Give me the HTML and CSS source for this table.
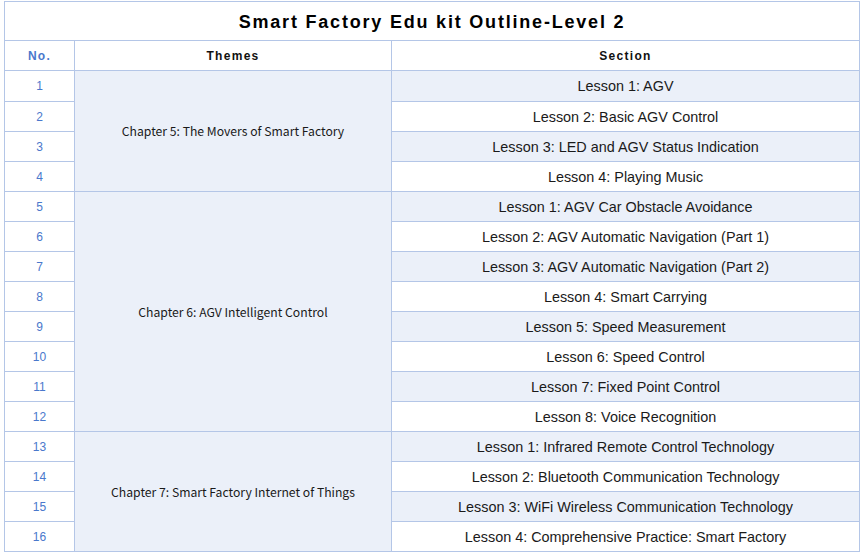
FILE: index.html
```html
<!DOCTYPE html>
<html>
<head>
<meta charset="utf-8">
<link rel="stylesheet" href="styles.css">
</head>
<body>
<div class="wrap">
<table class="outline">
  <colgroup><col class="c-no"><col class="c-theme"><col class="c-sec"></colgroup>
  <tr class="title-row"><th colspan="3" class="title">Smart Factory Edu kit Outline-Level 2</th></tr>
  <tr class="head-row"><th class="h-no">No.</th><th class="h">Themes</th><th class="h">Section</th></tr>
  <tr class="first-row"><td class="no">1</td><td class="theme" rowspan="4">Chapter 5: The Movers of Smart Factory</td><td class="sec alt">Lesson 1: AGV</td></tr>
  <tr><td class="no">2</td><td class="sec">Lesson 2: Basic AGV Control</td></tr>
  <tr><td class="no">3</td><td class="sec alt">Lesson 3: LED and AGV Status Indication</td></tr>
  <tr><td class="no">4</td><td class="sec">Lesson 4: Playing Music</td></tr>
  <tr><td class="no">5</td><td class="theme" rowspan="8">Chapter 6: AGV Intelligent Control</td><td class="sec alt">Lesson 1: AGV Car Obstacle Avoidance</td></tr>
  <tr><td class="no">6</td><td class="sec">Lesson 2: AGV Automatic Navigation (Part 1)</td></tr>
  <tr><td class="no">7</td><td class="sec alt">Lesson 3: AGV Automatic Navigation (Part 2)</td></tr>
  <tr><td class="no">8</td><td class="sec">Lesson 4: Smart Carrying</td></tr>
  <tr><td class="no">9</td><td class="sec alt">Lesson 5: Speed Measurement</td></tr>
  <tr><td class="no">10</td><td class="sec">Lesson 6: Speed Control</td></tr>
  <tr><td class="no">11</td><td class="sec alt">Lesson 7: Fixed Point Control</td></tr>
  <tr><td class="no">12</td><td class="sec">Lesson 8: Voice Recognition</td></tr>
  <tr><td class="no">13</td><td class="theme" rowspan="4">Chapter 7: Smart Factory Internet of Things</td><td class="sec alt">Lesson 1: Infrared Remote Control Technology</td></tr>
  <tr><td class="no">14</td><td class="sec">Lesson 2: Bluetooth Communication Technology</td></tr>
  <tr><td class="no">15</td><td class="sec alt">Lesson 3: WiFi Wireless Communication Technology</td></tr>
  <tr><td class="no">16</td><td class="sec">Lesson 4: Comprehensive Practice: Smart Factory</td></tr>
</table>
</div>
</body>
</html>
```
FILE: styles.css
```css
html, body { margin: 0; padding: 0; background: #ffffff; }
.wrap { padding: 1px 3px 0 4px; }
.outline {
  width: 856px;
  border-collapse: collapse;
  table-layout: fixed;
  border: 1px solid #4472c4;
  font-family: "Liberation Sans", Arial, sans-serif;
  color: #111111;
}
.c-no { width: 70px; }
.c-theme { width: 317px; }
.outline th, .outline td {
  border: 1px solid #b4c6e7;
  padding: 0;
  text-align: center;
  vertical-align: middle;
}
.outline tr { height: 30px; }
.outline .title-row { height: 39px; }
.outline .first-row { height: 31px; }
.outline .title {
  font-size: 18px;
  font-weight: bold;
  letter-spacing: 1.8px;
  color: #000000;
  padding-top: 3px;
}
.h, .h-no {
  font-size: 12px;
  font-weight: bold;
  letter-spacing: 1.3px;
  color: #111111;
}
.h-no { color: #4a78cc; }
.no {
  font-size: 12px;
  color: #4a78cc;
  background: #ffffff;
}
.theme {
  background: #ebf0f9;
  font-family: "Noto Sans CJK SC", "Noto Sans", sans-serif;
  font-size: 12.2px;
  color: #1a1a1a;
}
.sec {
  font-size: 14.4px;
  background: #ffffff;
  color: #1a1a1a;
}
.sec.alt { background: #ebf0f9; }
```
